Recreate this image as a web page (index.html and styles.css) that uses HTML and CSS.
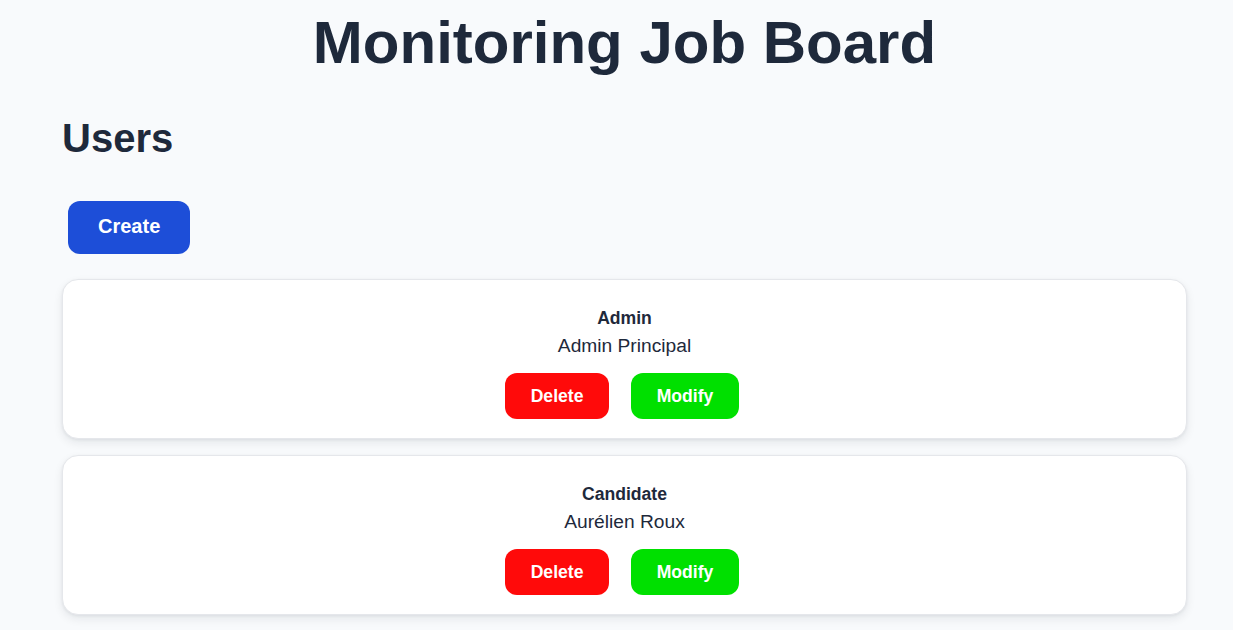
FILE: index.html
```html
<!DOCTYPE html>
<html lang="en">
<head>
<meta charset="utf-8">
<title>Monitoring Job Board</title>
<link rel="stylesheet" href="styles.css">
</head>
<body>
<main class="page">
  <h1 class="title">Monitoring Job Board</h1>
  <h2 class="section-title">Users</h2>
  <div class="toolbar">
    <button class="btn btn-create">Create</button>
  </div>
  <div class="user-list">
    <div class="user-card">
      <div class="user-role">Admin</div>
      <div class="user-name">Admin Principal</div>
      <div class="user-actions">
        <button class="btn btn-action btn-delete">Delete</button>
        <button class="btn btn-action btn-modify">Modify</button>
      </div>
    </div>
    <div class="user-card">
      <div class="user-role">Candidate</div>
      <div class="user-name">Aurélien Roux</div>
      <div class="user-actions">
        <button class="btn btn-action btn-delete">Delete</button>
        <button class="btn btn-action btn-modify">Modify</button>
      </div>
    </div>
  </div>
</main>
</body>
</html>
```

FILE: styles.css
```css
* { box-sizing: border-box; }

html, body {
  margin: 0;
  padding: 0;
  background: #f8fafc;
  color: #1e293b;
  font-family: "Liberation Sans", Arial, sans-serif;
}

.page {
  padding: 8px 46px 40px 62px;
}

.title {
  margin: 0;
  font-size: 60px;
  line-height: 69px;
  font-weight: 700;
  text-align: center;
  color: #1e293b;
}

.section-title {
  margin: 38px 0 0 0;
  font-size: 40px;
  line-height: 46px;
  font-weight: 700;
  color: #1e293b;
}

.toolbar {
  margin-top: 40px;
  padding-left: 6px;
}

.btn {
  font-family: "Liberation Sans", Arial, sans-serif;
  font-weight: 700;
  color: #ffffff;
  border: none;
  cursor: pointer;
}

.btn-create {
  background: #1d4ed8;
  font-size: 20px;
  line-height: 21px;
  padding: 15px 30px 17px;
  border-radius: 12px;
}

.user-list {
  margin-top: 25px;
  display: flex;
  flex-direction: column;
  gap: 16px;
}

.user-card {
  background: #ffffff;
  border: 1px solid #e5e7eb;
  border-radius: 16px;
  box-shadow: 0 4px 10px rgba(15, 23, 42, 0.08), 0 1px 3px rgba(15, 23, 42, 0.06);
  padding: 25px 20px 19px;
  display: flex;
  flex-direction: column;
  align-items: center;
  text-align: center;
}

.user-role {
  font-size: 17.6px;
  line-height: 26px;
  font-weight: 700;
}

.user-name {
  font-size: 19.2px;
  line-height: 29px;
}

.user-actions {
  margin-top: 13px;
  padding-right: 5px;
  display: flex;
  gap: 22px;
}

.btn-action {
  font-size: 17.6px;
  line-height: 22px;
  padding: 12px 25.6px;
  border-radius: 12px;
}

.btn-delete { background: #ff0a0a; }
.btn-modify { background: #00e000; }
```
